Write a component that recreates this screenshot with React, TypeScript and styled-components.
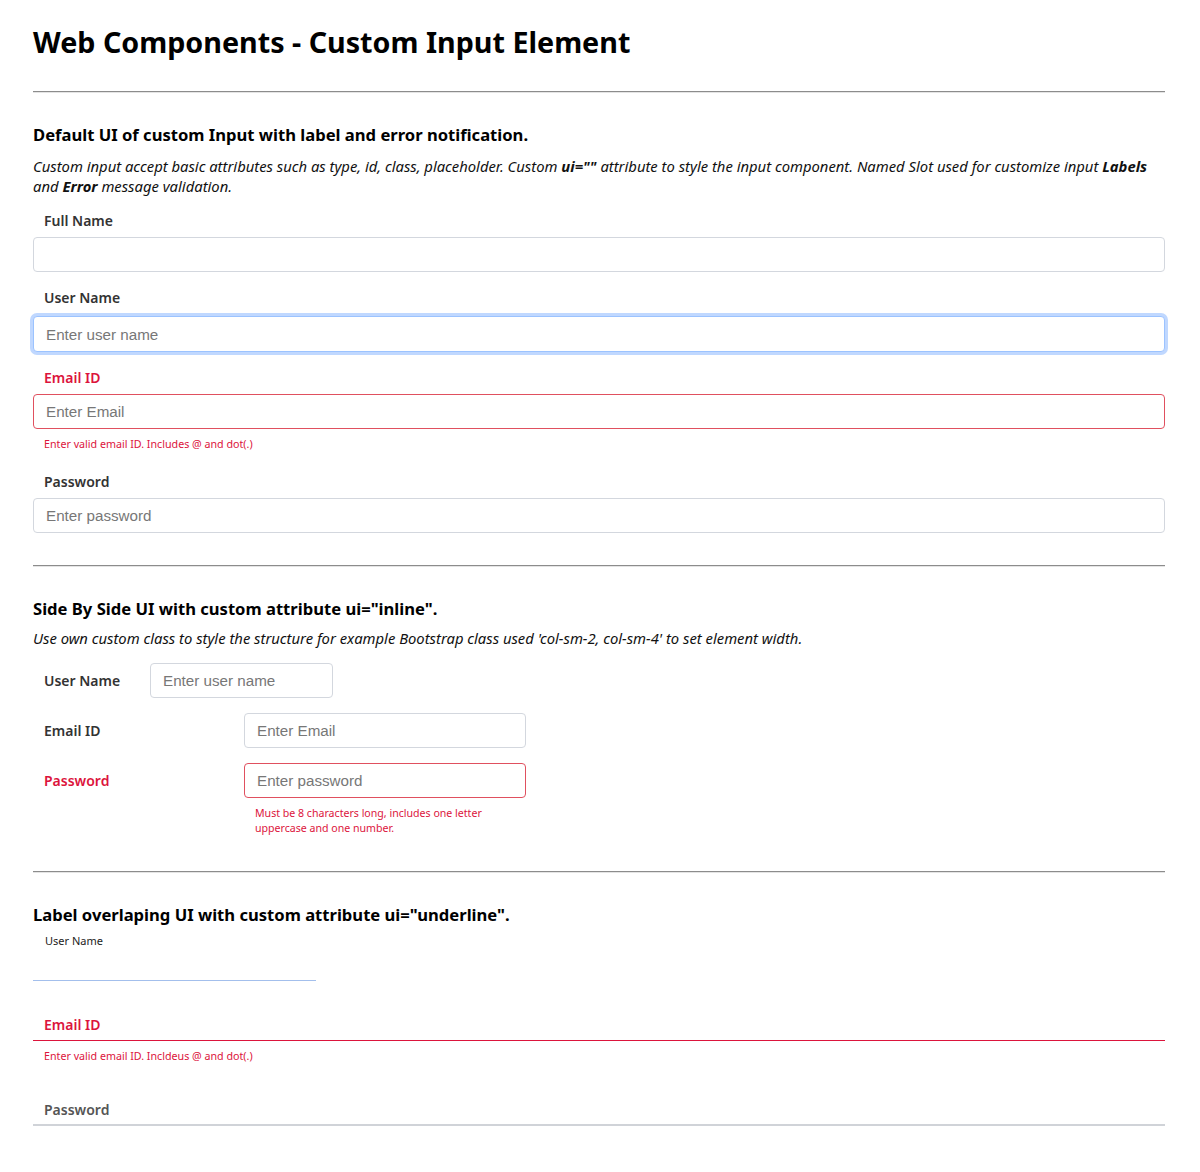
import styled, { createGlobalStyle, css } from 'styled-components';

const GlobalStyle = createGlobalStyle`
	body {
		margin: 0;
		background: #fff;
		font-family: 'Noto Sans', 'Open Sans', sans-serif;
		color: #000;
	}
	* {
		box-sizing: border-box;
	}
`;

const red = '#dc143c';

const App = () => {
	return (
		<Page>
			<GlobalStyle />
			<Title>Web Components - Custom Input Element</Title>
			<Divider $top={29} />

			<SectionTitle>Default UI of custom Input with label and error notification.</SectionTitle>
			<Note>
				Custom input accept basic attributes such as type, id, class, placeholder. Custom <b>ui=""</b>{' '}
				attribute to style the input component. Named Slot used for customize input <b>Labels</b> and{' '}
				<b>Error</b> message validation.
			</Note>
			<Stack>
				<Field>
					<Label>Full Name</Label>
					<Input type='text' />
				</Field>
				<Field>
					<Label>User Name</Label>
					<Input type='text' placeholder='Enter user name' $focused />
				</Field>
				<Field>
					<Label $error>Email ID</Label>
					<Input type='email' placeholder='Enter Email' $error />
					<ErrorText>Enter valid email ID. Includes @ and dot(.)</ErrorText>
				</Field>
				<Field>
					<Label>Password</Label>
					<Input type='password' placeholder='Enter password' />
				</Field>
			</Stack>
			<Divider $top={32} />

			<SectionTitle>Side By Side UI with custom attribute ui="inline".</SectionTitle>
			<Note $tight>
				Use own custom class to style the structure for example Bootstrap class used 'col-sm-2, col-sm-4' to set
				element width.
			</Note>
			<InlineList>
				<InlineRow $labelWidth={117}>
					<Label>User Name</Label>
					<InlineControl $width={183}>
						<Input type='text' placeholder='Enter user name' />
					</InlineControl>
				</InlineRow>
				<InlineRow $labelWidth={211}>
					<Label>Email ID</Label>
					<InlineControl $width={282}>
						<Input type='email' placeholder='Enter Email' />
					</InlineControl>
				</InlineRow>
				<InlineRow $labelWidth={211}>
					<Label $error>Password</Label>
					<InlineControl $width={282}>
						<Input type='password' placeholder='Enter password' $error />
						<InlineError>
							Must be 8 characters long, includes one letter
							<br />
							uppercase and one number.
						</InlineError>
					</InlineControl>
				</InlineRow>
			</InlineList>
			<Divider $top={35} />

			<SectionTitle>Label overlaping UI with custom attribute ui="underline".</SectionTitle>
			<UnderlineStack>
				<FloatField $width={283}>
					<FloatLabel>User Name</FloatLabel>
					<UnderInput type='text' $tone='focus' />
				</FloatField>
				<OverlapField>
					<OverlapLabel $tone='error'>Email ID</OverlapLabel>
					<UnderInput type='email' $tone='error' />
					<ErrorText $gap={8}>Enter valid email ID. Incldeus @ and dot(.)</ErrorText>
				</OverlapField>
				<OverlapField $top={22}>
					<OverlapLabel $tone='idle'>Password</OverlapLabel>
					<UnderInput type='password' $tone='idle' />
				</OverlapField>
			</UnderlineStack>
		</Page>
	);
};

const Page = styled.div`
	padding: 22px 35px 40px 33px;
`;

const Title = styled.h1`
	margin: 0;
	font-size: 28.7px;
	line-height: 40px;
	font-weight: 700;
`;

const Divider = styled.hr<{ $top?: number }>`
	margin: ${(p) => p.$top ?? 26}px 0 0;
	border: 0;
	border-top: 1px solid #8c8c8c;
	border-bottom: 1px solid #e4e4e4;
	height: 0;
`;

const SectionTitle = styled.h3`
	margin: 30px 0 0;
	font-size: 16.6px;
	line-height: 24px;
	font-weight: 700;
`;

const Note = styled.p<{ $tight?: boolean }>`
	margin: ${(p) => (p.$tight ? 7 : 9)}px 0 0;
	font-size: 14.8px;
	line-height: 20px;
	font-style: italic;
	color: #111;
	b {
		font-weight: 700;
	}
`;

const Stack = styled.div`
	margin-top: 15px;
	display: flex;
	flex-direction: column;
	gap: 16px;
`;

const Field = styled.div`
	display: flex;
	flex-direction: column;
	gap: 6px;
`;

const Label = styled.label<{ $error?: boolean }>`
	padding-left: 11px;
	font-size: 14px;
	line-height: 20px;
	font-weight: 600;
	color: ${(p) => (p.$error ? red : '#333')};
`;

const Input = styled.input<{ $error?: boolean; $focused?: boolean }>`
	display: block;
	width: 100%;
	height: 35px;
	padding: 0 12px;
	border: 1px solid #d3d7de;
	border-radius: 4px;
	font-family: 'Liberation Sans', Arial, sans-serif;
	font-size: 15.2px;
	color: #333;
	background: #fff;
	outline: none;
	&::placeholder {
		color: #777;
	}
	${(p) =>
		p.$error &&
		css`
			border-color: #e0505f;
		`}
	${(p) =>
		p.$focused &&
		css`
			margin-top: 2px;
			height: 36px;
			border-color: #9cc3ff;
			box-shadow: 0 0 0 3px #c0d8ff;
		`}
`;

const ErrorText = styled.div<{ $gap?: number }>`
	margin: ${(p) => p.$gap ?? 2}px 0 5px;
	padding-left: 11px;
	font-size: 10.7px;
	line-height: 14px;
	color: ${red};
`;

const InlineList = styled.div`
	margin-top: 15px;
	display: flex;
	flex-direction: column;
	gap: 15px;
`;

const InlineRow = styled.div<{ $labelWidth: number }>`
	display: grid;
	grid-template-columns: ${(p) => p.$labelWidth}px auto;
	align-items: start;
	${Label} {
		line-height: 35px;
	}
`;

const InlineControl = styled.div<{ $width: number }>`
	width: ${(p) => p.$width}px;
`;

const InlineError = styled.div`
	margin-top: 8px;
	padding-left: 11px;
	font-size: 10.6px;
	line-height: 15px;
	color: ${red};
`;

const UnderlineStack = styled.div`
	margin-top: 6px;
	display: flex;
	flex-direction: column;
`;

const FloatField = styled.div<{ $width: number }>`
	width: ${(p) => p.$width}px;
	display: flex;
	flex-direction: column;
`;

const FloatLabel = styled.label`
	padding-left: 12px;
	font-size: 11px;
	line-height: 16px;
	color: #222;
`;

const toneColor = { focus: '#a3bfec', error: red, idle: '#d0d3d8' };

const UnderInput = styled.input<{ $tone: 'focus' | 'error' | 'idle' }>`
	display: block;
	width: 100%;
	height: ${(p) => (p.$tone === 'focus' ? 32 : 36)}px;
	padding: 0 11px;
	border: 0;
	border-bottom: ${(p) => (p.$tone === 'idle' ? 2 : 1)}px solid ${(p) => toneColor[p.$tone]};
	background: transparent;
	outline: none;
	font-family: 'Liberation Sans', Arial, sans-serif;
	font-size: 16px;
`;

const OverlapField = styled.div<{ $top?: number }>`
	position: relative;
	margin-top: ${(p) => p.$top ?? 24}px;
`;

const OverlapLabel = styled.label<{ $tone: 'error' | 'idle' }>`
	position: absolute;
	left: 11px;
	top: 2px;
	font-size: 14px;
	line-height: 36px;
	font-weight: 600;
	color: ${(p) => (p.$tone === 'error' ? red : '#555')};
	pointer-events: none;
`;

export default App;
